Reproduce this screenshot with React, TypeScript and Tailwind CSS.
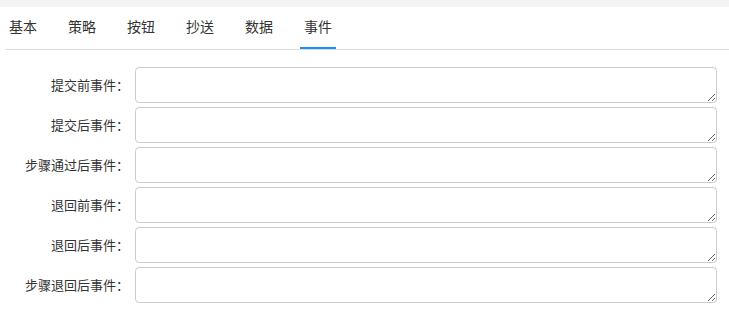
import { useState } from 'react';

const tabs = ['基本', '策略', '按钮', '抄送', '数据', '事件'];

const fields = ['提交前事件', '提交后事件', '步骤通过后事件', '退回前事件', '退回后事件', '步骤退回后事件'];

export default function App() {
  const [active, setActive] = useState(5);

  return (
    <div
      className="h-[312px] w-[729px] overflow-hidden bg-white text-[#333]"
      style={{ fontFamily: '"Noto Sans CJK SC", "Noto Sans", sans-serif' }}
    >
      <div className="h-[7px] bg-[#f3f3f3]" />
      <div className="ml-[5px] flex h-[43px] gap-[23px] border-b border-[#ddd]">
        {tabs.map((t, i) => (
          <button
            key={t}
            onClick={() => setActive(i)}
            className={
              'flex h-[42px] w-[36px] items-center justify-center border-b-2 pb-[2px] text-[14px] leading-[20px] ' +
              (i === active ? 'border-[#1890ff]' : 'border-transparent')
            }
          >
            {t}
          </button>
        ))}
      </div>

      <div className="flex flex-col gap-1 pt-[17px] pr-[12px]">
        {fields.map((f) => (
          <div key={f} className="flex items-center">
            <label className="w-[129px] shrink-0 text-right text-[13px] leading-[18px]">{f}：</label>
            <textarea className="ml-[6px] block h-[36px] flex-1 rounded-[4px] border border-[#ccc] bg-white outline-none" />
          </div>
        ))}
      </div>
    </div>
  );
}
